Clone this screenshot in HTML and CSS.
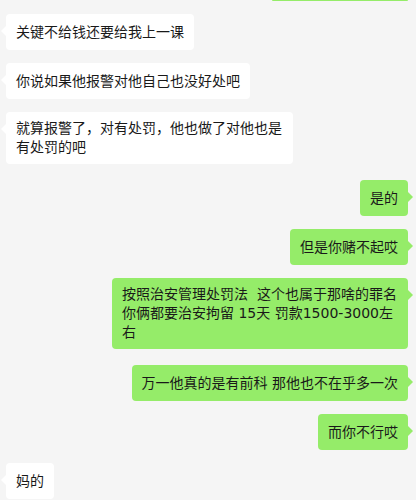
FILE: index.html
```html
<!DOCTYPE html>
<html lang="zh-CN">

<head>
  <meta charset="UTF-8">
  <meta name="viewport" content="width=device-width, initial-scale=1.0">
  <title>聊天记录</title>
  <link rel="stylesheet" href="styles.css">
</head>

<body>
  <div class="chat">
    <!-- 上一条消息只露出底边 -->
    <div class="msg right cut"></div>

    <div class="msg left">
      <div class="bubble">关键不给钱还要给我上一课</div>
    </div>
    <div class="msg left">
      <div class="bubble">你说如果他报警对他自己也没好处吧</div>
    </div>
    <div class="msg left tall">
      <div class="bubble">就算报警了，对有处罚，他也做了对他也是有处罚的吧</div>
    </div>

    <div class="msg right">
      <div class="bubble">是的</div>
    </div>
    <div class="msg right">
      <div class="bubble">但是你赌不起哎</div>
    </div>
    <div class="msg right tall">
      <div class="bubble">按照治安管理处罚法&nbsp; 这个也属于那啥的罪名 你俩都要治安拘留 15天 罚款1500-3000左右</div>
    </div>
    <div class="msg right">
      <div class="bubble">万一他真的是有前科 那他也不在乎多一次</div>
    </div>
    <div class="msg right">
      <div class="bubble">而你不行哎</div>
    </div>

    <div class="msg left">
      <div class="bubble">妈的</div>
    </div>
  </div>
</body>

</html>
```

FILE: styles.css
```css
body {
  margin: 0;
  background-color: #f5f5f5;
  font-family: 'DejaVu Sans', 'Noto Sans CJK SC', sans-serif;
  font-size: 14px;
  color: #191919;
}

.chat {
  display: flex;
  flex-direction: column;
  gap: 13px;
  padding: 0 8px 0 6px;
}

.msg {
  display: flex;
}

.msg.left {
  justify-content: flex-start;
}

.msg.right {
  justify-content: flex-end;
}

/* 多行气泡下面间距稍大一点 */
.msg.tall {
  margin-bottom: 3px;
}

.msg.cut {
  height: 1px;
  width: 136px;
  align-self: flex-end;
  background-color: #95ec69;
  border-radius: 0 0 2px 2px;
}

.bubble {
  position: relative;
  display: flex;
  align-items: center;
  min-height: 36px;
  box-sizing: border-box;
  padding: 7px 10px;
  line-height: 19px;
  border-radius: 4px;
  background-color: #ffffff;
  max-width: 287px;
  word-break: break-all;
}

.right .bubble {
  background-color: #95ec69;
  max-width: 296px;
}

/* 小三角 */
.bubble::before {
  content: '';
  position: absolute;
  top: 12px;
  border-top: 5px solid transparent;
  border-bottom: 5px solid transparent;
}

.left .bubble::before {
  left: -5px;
  border-right: 5px solid #ffffff;
}

.right .bubble::before {
  right: -5px;
  border-left: 5px solid #95ec69;
}
```
